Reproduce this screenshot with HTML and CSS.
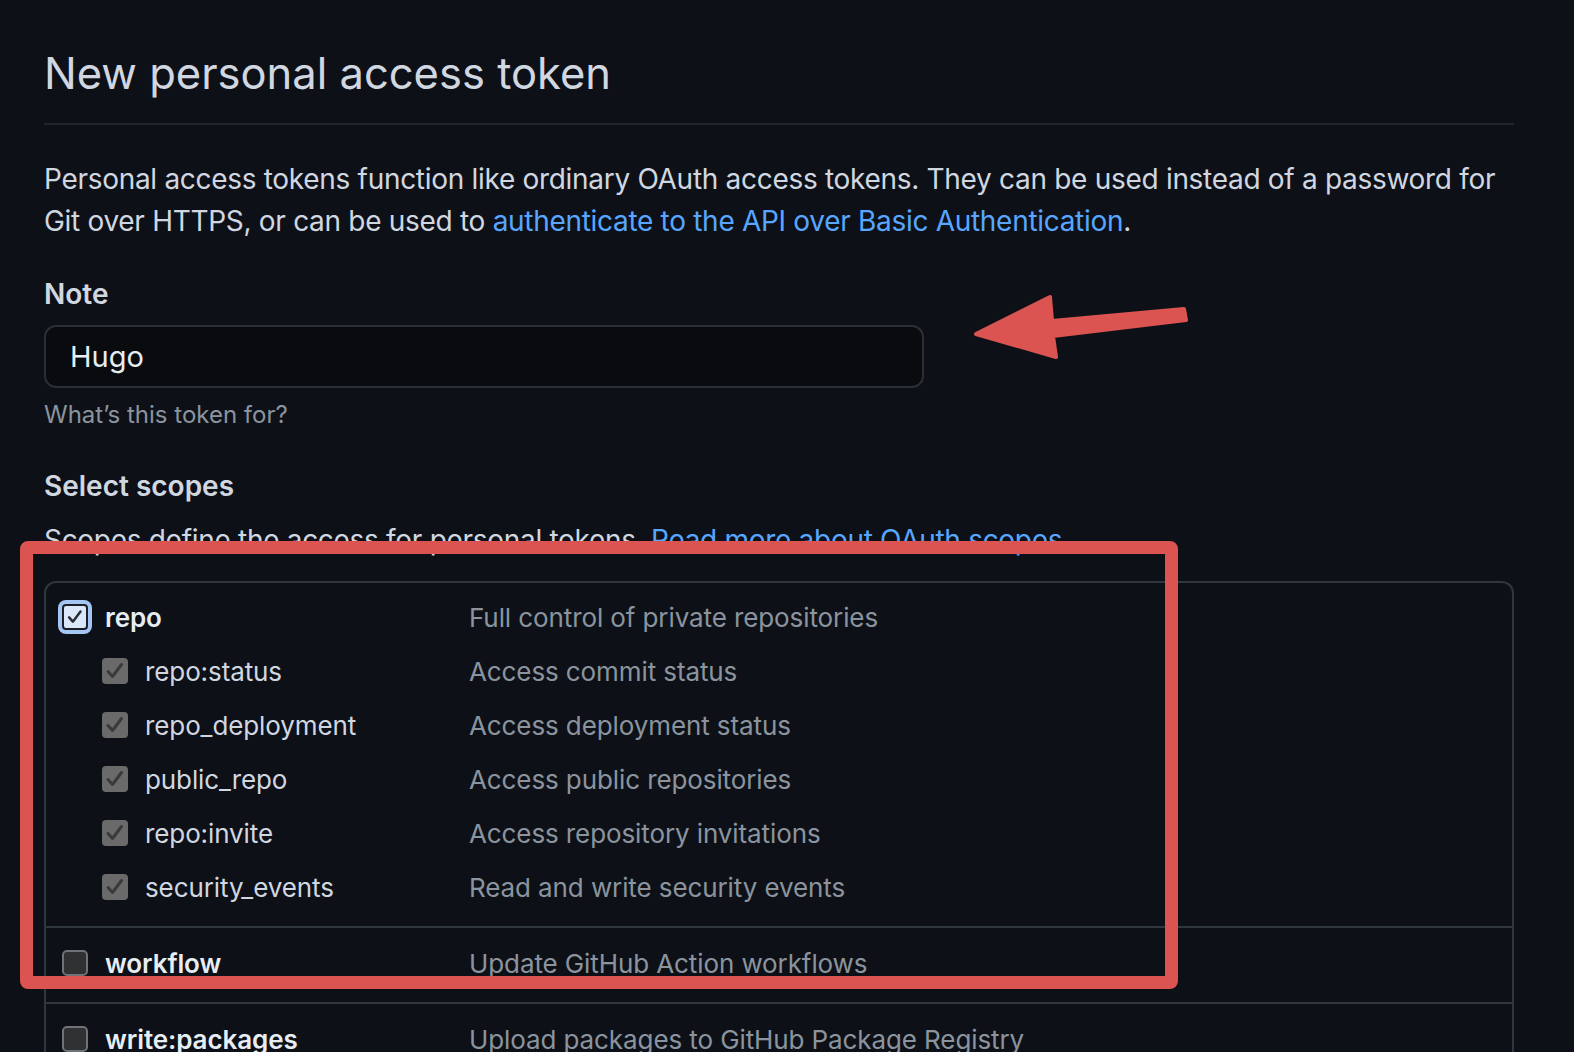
FILE: index.html
```html
<!DOCTYPE html>
<html>
<head>
<meta charset="utf-8">
<link rel="stylesheet" href="styles.css">
</head>
<body>
<main class="page">
  <h1 class="title">New personal access token</h1>
  <p class="intro">Personal access tokens function like ordinary OAuth access tokens. They can be used instead of a password for Git over HTTPS, or can be used to <a class="link" href="#">authenticate to the API over Basic Authentication</a>.</p>

  <div class="label">Note</div>
  <div class="input">Hugo</div>
  <div class="hint">What’s this token for?</div>

  <div class="label label-scopes">Select scopes</div>
  <p class="scopes-intro">Scopes define the access for personal tokens. <a class="link" href="#">Read more about OAuth scopes.</a></p>

  <div class="scopes">
    <div class="group">
      <div class="row">
        <div class="name top"><span class="cb cb-focus"><svg viewBox="0 0 26 26"><path d="M6 13.5 L10.5 18.5 L19.5 6.5" /></svg></span><b>repo</b></div>
        <div class="desc">Full control of private repositories</div>
      </div>
      <div class="row">
        <div class="name sub"><span class="cb cb-disabled"><svg viewBox="0 0 26 26"><path d="M6 13.5 L10.5 18.5 L19.5 6.5" /></svg></span>repo:status</div>
        <div class="desc">Access commit status</div>
      </div>
      <div class="row">
        <div class="name sub"><span class="cb cb-disabled"><svg viewBox="0 0 26 26"><path d="M6 13.5 L10.5 18.5 L19.5 6.5" /></svg></span>repo_deployment</div>
        <div class="desc">Access deployment status</div>
      </div>
      <div class="row">
        <div class="name sub"><span class="cb cb-disabled"><svg viewBox="0 0 26 26"><path d="M6 13.5 L10.5 18.5 L19.5 6.5" /></svg></span>public_repo</div>
        <div class="desc">Access public repositories</div>
      </div>
      <div class="row">
        <div class="name sub"><span class="cb cb-disabled"><svg viewBox="0 0 26 26"><path d="M6 13.5 L10.5 18.5 L19.5 6.5" /></svg></span>repo:invite</div>
        <div class="desc">Access repository invitations</div>
      </div>
      <div class="row">
        <div class="name sub"><span class="cb cb-disabled"><svg viewBox="0 0 26 26"><path d="M6 13.5 L10.5 18.5 L19.5 6.5" /></svg></span>security_events</div>
        <div class="desc">Read and write security events</div>
      </div>
    </div>
    <div class="group">
      <div class="row">
        <div class="name top"><span class="cb cb-empty"></span><b>workflow</b></div>
        <div class="desc">Update GitHub Action workflows</div>
      </div>
    </div>
    <div class="group">
      <div class="row">
        <div class="name top"><span class="cb cb-empty"></span><b>write:packages</b></div>
        <div class="desc">Upload packages to GitHub Package Registry</div>
      </div>
    </div>
  </div>
</main>

<div class="annot-box"></div>
<svg class="annot-arrow" width="1574" height="1052" viewBox="0 0 1574 1052">
  <polygon points="976,334 1050,297 1052,321 1184,309 1186,320 1053,336 1056,357" />
</svg>
</body>
</html>
```

FILE: styles.css
```css
html, body {
  margin: 0;
  padding: 0;
  background: #0d1117;
}
body {
  width: 1574px;
  height: 1052px;
  overflow: hidden;
  position: relative;
  font-family: Inter, "Noto Sans", "Liberation Sans", sans-serif;
  color: #c9d1d9;
}
.page {
  margin-left: 44px;
  width: 1470px;
}
.title {
  margin: 0;
  padding-top: 47px;
  padding-bottom: 24px;
  font-size: 43.5px;
  line-height: 52px;
  font-weight: 400;
  color: #d1d7e0;
  border-bottom: 2px solid #21262d;
}
.intro {
  margin: 33px 0 0;
  font-size: 28px;
  line-height: 42px;
  letter-spacing: -0.3px;
  color: #d1d7e0;
}
.link {
  color: #58a6ff;
  text-decoration: none;
}
.label {
  margin-top: 31px;
  font-size: 28px;
  line-height: 42px;
  font-weight: 600;
  color: #d1d7e0;
}
.input {
  margin-top: 10px;
  width: 880px;
  height: 63px;
  box-sizing: border-box;
  border: 2px solid #2a2f37;
  border-radius: 12px;
  background: #090b0f;
  padding-left: 24px;
  display: flex;
  align-items: center;
  font-size: 29px;
  color: #e6edf3;
}
.hint {
  margin-top: 9px;
  font-size: 24px;
  line-height: 36px;
  color: #8b949e;
}
.label-scopes {
  margin-top: 32px;
}
.scopes-intro {
  margin: 12px 0 0;
  font-size: 28px;
  line-height: 42px;
  letter-spacing: -0.3px;
  color: #d1d7e0;
}
.scopes {
  margin-top: 20px;
  border: 2px solid #30363d;
  border-radius: 12px;
  border-bottom: none;
  border-bottom-left-radius: 0;
  border-bottom-right-radius: 0;
}
.group {
  padding: 7px 0 12px;
}
.group + .group {
  border-top: 2px solid #30363d;
  padding-top: 8px;
}
.row {
  display: grid;
  grid-template-columns: 423px 1fr;
  height: 54px;
  align-items: center;
  font-size: 26px;
  letter-spacing: -0.1px;
}
.name {
  display: flex;
  align-items: center;
  gap: 17px;
  color: #d1d7e0;
}
.name b {
  font-weight: 600;
  color: #e6edf3;
}
.name.top {
  padding-left: 16px;
}
.name.sub {
  padding-left: 56px;
}
.desc {
  color: #8b949e;
}
.cb {
  width: 26px;
  height: 26px;
  box-sizing: border-box;
  border-radius: 5px;
  flex: none;
  display: flex;
  align-items: center;
  justify-content: center;
}
.cb svg {
  width: 26px;
  height: 26px;
  fill: none;
  stroke-width: 3;
  stroke-linecap: round;
  stroke-linejoin: round;
}
.cb-focus {
  background: #dbe8fb;
  border: 2px solid #1c2026;
  box-shadow: 0 0 0 4px #a4c6f4;
  border-radius: 4px;
}
.cb-focus svg {
  stroke: #2b2f35;
}
.cb-disabled {
  background: #6a6a6a;
  border-radius: 4px;
}
.cb-disabled svg {
  stroke: #3a3a3a;
}
.cb-empty {
  background: #2f3133;
  border: 2px solid #6f7378;
}
.annot-box {
  position: absolute;
  left: 20px;
  top: 541px;
  width: 1158px;
  height: 448px;
  box-sizing: border-box;
  border: 13px solid #db5451;
  border-radius: 8px;
}
.annot-arrow {
  position: absolute;
  left: 0;
  top: 0;
  pointer-events: none;
}
.annot-arrow polygon {
  fill: #db5451;
  stroke: #db5451;
  stroke-width: 4;
  stroke-linejoin: round;
}
```
